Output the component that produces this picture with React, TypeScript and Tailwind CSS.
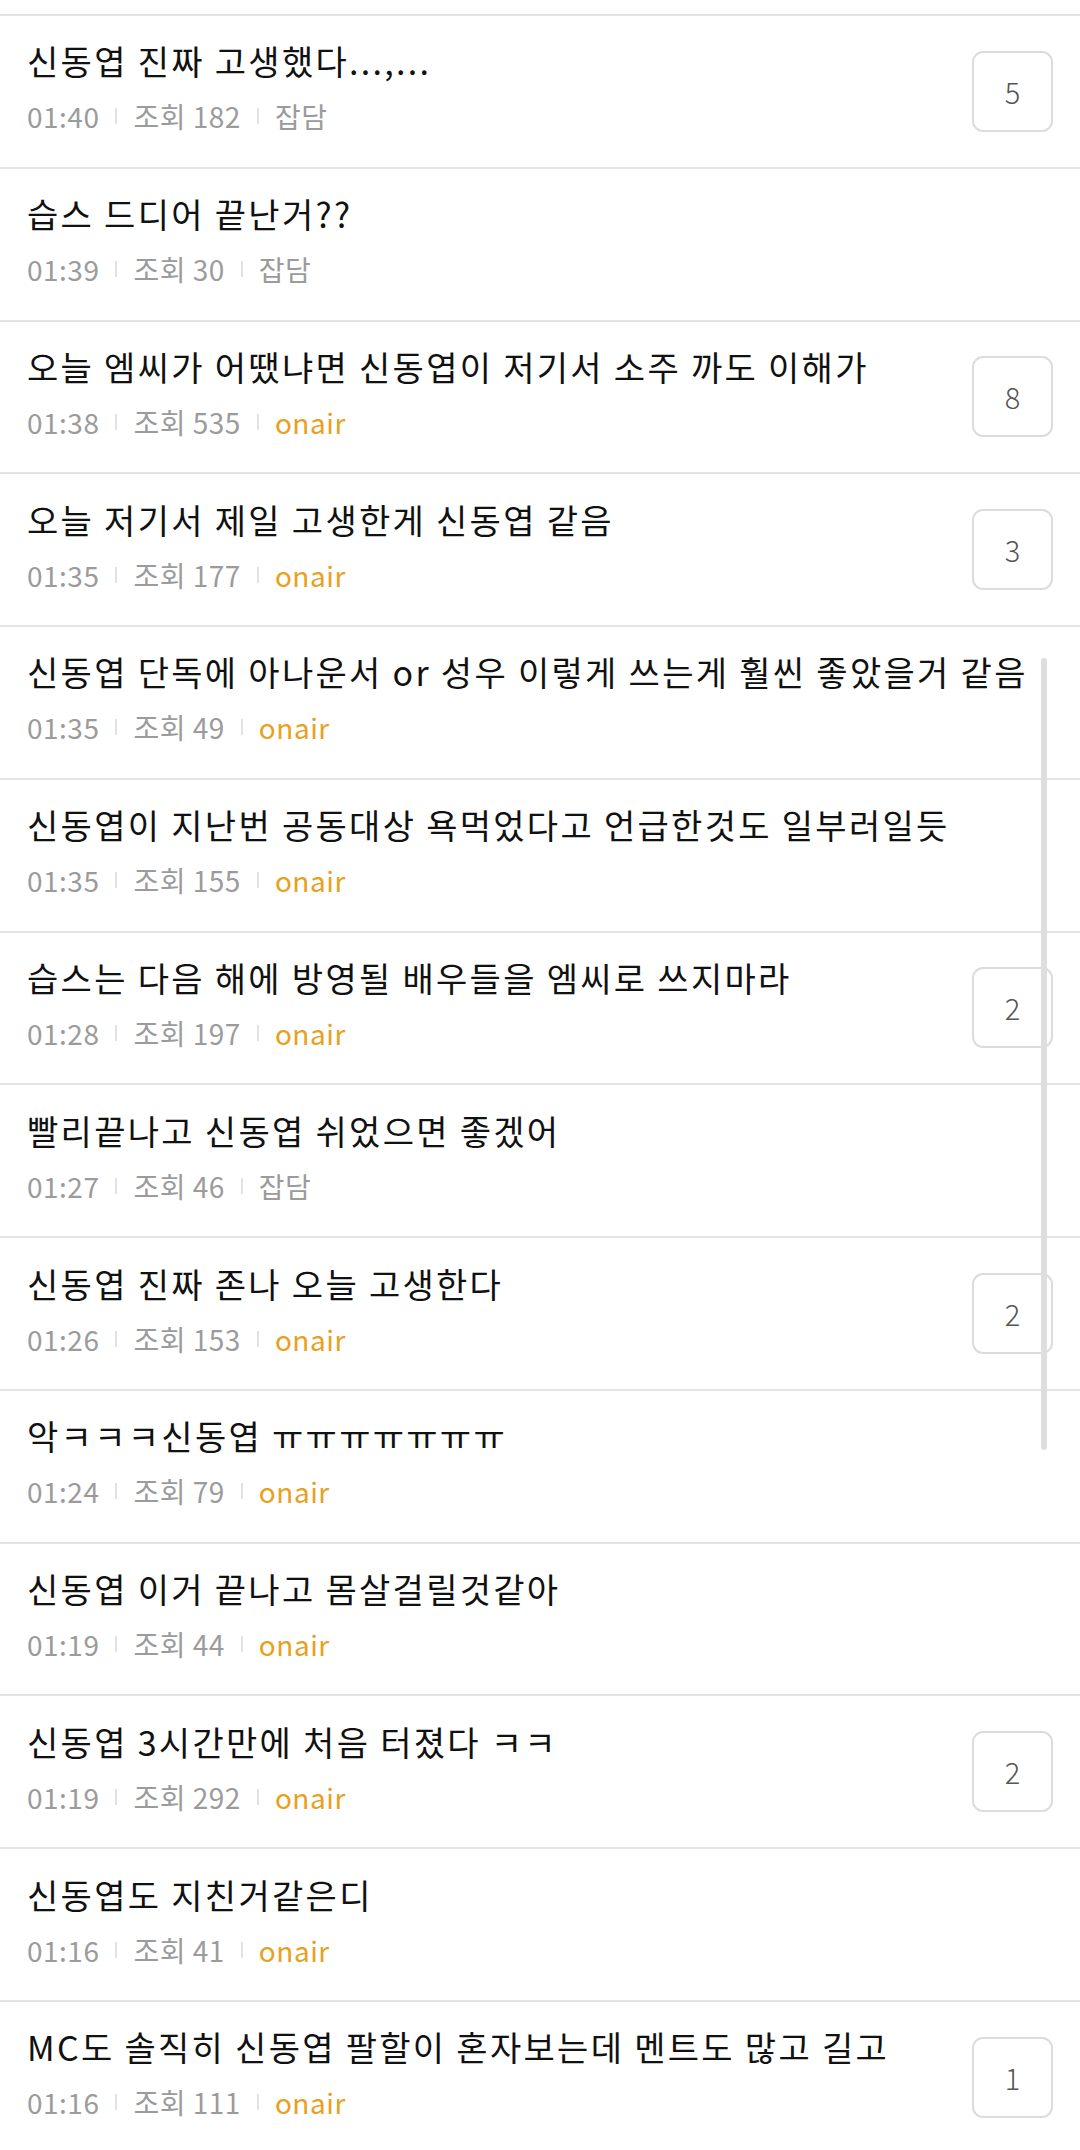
const posts = [
  { title: "신동엽 진짜 고생했다...,...", time: "01:40", views: 182, tag: "잡담", count: 5 },
  { title: "습스 드디어 끝난거??", time: "01:39", views: 30, tag: "잡담" },
  { title: "오늘 엠씨가 어땠냐면 신동엽이 저기서 소주 까도 이해가", time: "01:38", views: 535, tag: "onair", count: 8 },
  { title: "오늘 저기서 제일 고생한게 신동엽 같음", time: "01:35", views: 177, tag: "onair", count: 3 },
  { title: "신동엽 단독에 아나운서 or 성우 이렇게 쓰는게 훨씬 좋았을거 같음", time: "01:35", views: 49, tag: "onair" },
  { title: "신동엽이 지난번 공동대상 욕먹었다고 언급한것도 일부러일듯", time: "01:35", views: 155, tag: "onair" },
  { title: "습스는 다음 해에 방영될 배우들을 엠씨로 쓰지마라", time: "01:28", views: 197, tag: "onair", count: 2 },
  { title: "빨리끝나고 신동엽 쉬었으면 좋겠어", time: "01:27", views: 46, tag: "잡담" },
  { title: "신동엽 진짜 존나 오늘 고생한다", time: "01:26", views: 153, tag: "onair", count: 2 },
  { title: "악ㅋㅋㅋ신동엽 ㅠㅠㅠㅠㅠㅠㅠ", time: "01:24", views: 79, tag: "onair" },
  { title: "신동엽 이거 끝나고 몸살걸릴것같아", time: "01:19", views: 44, tag: "onair" },
  { title: "신동엽 3시간만에 처음 터졌다 ㅋㅋ", time: "01:19", views: 292, tag: "onair", count: 2 },
  { title: "신동엽도 지친거같은디", time: "01:16", views: 41, tag: "onair" },
  { title: "MC도 솔직히 신동엽 팔할이 혼자보는데 멘트도 많고 길고", time: "01:16", views: 111, tag: "onair", count: 1 },
];

function Sep() {
  return <span className="mx-[16px] inline-block h-[16px] w-[2px] bg-[#e2e2e2]" />;
}

export default function App() {
  return (
    <div
      className="relative h-[2150px] w-[1080px] overflow-hidden bg-white pt-[14px]"
      style={{ fontFamily: '"Noto Sans CJK KR", "Noto Sans", sans-serif' }}
    >
      {posts.map((p, i) => (
        <div
          key={i}
          className="flex h-[152.77px] items-center justify-between border-t-2 border-[#e4e4e4] pl-[27px] pr-[27px]"
        >
          <div className="mb-[8px] flex flex-col">
            <div className="whitespace-nowrap text-[34px] leading-[46px] tracking-[2.3px] text-[#111]">{p.title}</div>
            <div className="mt-[12px] flex items-center text-[28px] leading-[40px] tracking-[0.5px] text-[#9b9b9b]">
              <span>{p.time}</span>
              <Sep />
              <span>조회 {p.views}</span>
              <Sep />
              <span className={p.tag === "onair" ? "text-[#e8a020]" : ""}>{p.tag}</span>
            </div>
          </div>
          {p.count !== undefined && (
            <div className="flex h-[81px] w-[81px] shrink-0 items-center justify-center rounded-[11px] border-2 border-[#dcdcdc] text-[29px] font-light text-[#555]">
              {p.count}
            </div>
          )}
        </div>
      ))}
      <div className="absolute left-[1041px] top-[658px] h-[792px] w-[6px] rounded-full bg-[#dedede]" />
    </div>
  );
}
